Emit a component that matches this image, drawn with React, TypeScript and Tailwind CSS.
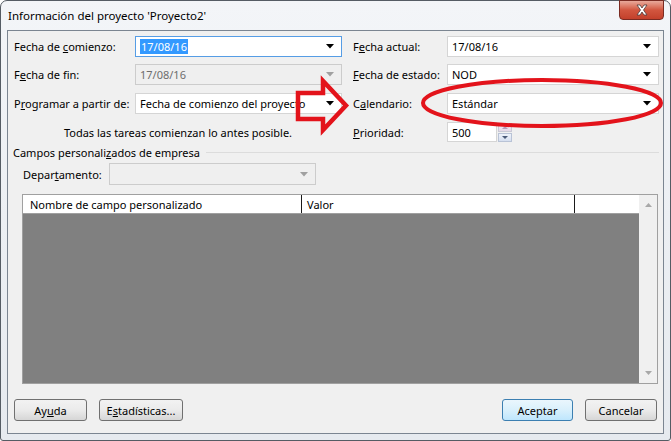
import React from "react";

const font = { fontFamily: '"Noto Sans", "Segoe UI", sans-serif' };

function Tri({ gray = false }: { gray?: boolean }) {
  return (
    <svg width="8" height="5" viewBox="0 0 8 5" className="shrink-0">
      <path d="M0 0 H8 L4 4.5 Z" fill={gray ? "#a0a0a0" : "#000"} />
    </svg>
  );
}

function Combo({
  value,
  w,
  disabled = false,
  focused = false,
  selected = false,
  h = "h-[21px]",
}: {
  value: string;
  w: string;
  disabled?: boolean;
  focused?: boolean;
  selected?: boolean;
  h?: string;
}) {
  return (
    <div
      className={`${w} ${h} shrink-0 flex items-center border ${
        focused ? "border-[#569de5]" : disabled ? "border-[#cccccc]" : "border-[#d5d5d5]"
      } ${disabled ? "bg-[#efefef]" : "bg-white"} pl-[4px] pr-[7px]`}
    >
      <div className="flex-1 overflow-hidden whitespace-nowrap leading-[15px]">
        {selected ? (
          <span className="bg-[#3399ff] text-white px-[1px] py-[1px]">{value}</span>
        ) : (
          <span className={disabled ? "text-[#6d6d6d]" : "text-black"}>{value}</span>
        )}
      </div>
      <Tri gray={disabled} />
    </div>
  );
}

function Btn({ children, w, def = false }: { children: React.ReactNode; w: string; def?: boolean }) {
  return (
    <div
      className={`${w} h-[22px] flex items-center justify-center rounded-[3px] border whitespace-nowrap ${
        def
          ? "border-[#3c7fb1] bg-gradient-to-b from-[#eaf6fd] via-[#d9f0fc] to-[#bee6fd]"
          : "border-[#707070] bg-gradient-to-b from-[#f2f2f2] via-[#ebebeb] to-[#d6d6d6]"
      } text-black`}
    >
      {children}
    </div>
  );
}

export default function App() {
  return (
    <div className="w-[671px] h-[441px] bg-white overflow-hidden" style={font}>
      <div className="relative w-[671px] h-[441px] flex flex-col rounded-t-[7px] rounded-b-[3px] border border-[#555c64] bg-gradient-to-b from-[#f3f5f8] via-[#eceff3] to-[#e6eaef] text-[11px] leading-[15px]">
        {/* title bar */}
        <div className="h-[29px] flex items-center pl-[7px] text-black text-[11.5px] shrink-0 whitespace-nowrap">
          Información del proyecto 'Proyecto2'
        </div>
        <div className="absolute top-[-1px] right-[6px] w-[45px] h-[20px] rounded-b-[4px] border border-[#7a2b22] bg-gradient-to-b from-[#e8a99b] via-[#d2563f] to-[#c3402b] flex items-center justify-center">
          <svg width="14" height="12" viewBox="0 0 14 12">
            <path
              d="M2 1 L5 1 L7 4 L9 1 L12 1 L8.5 6 L12 11 L9 11 L7 8 L5 11 L2 11 L5.5 6 Z"
              fill="#ffffff"
              stroke="#4a3a3a"
              strokeWidth="0.8"
            />
          </svg>
        </div>

        {/* client area */}
        <div className="mx-[6px] mb-[6px] flex-1 border border-[#7b8591] bg-[#f0f0f0] flex flex-col text-black whitespace-nowrap">
          {/* row 1 */}
          <div className="flex items-center mt-[5px] pl-[6px]">
            <div className="w-[121px] shrink-0">
              Fecha de <span className="underline">c</span>omienzo:
            </div>
            <Combo w="w-[207px]" value="17/08/16" focused selected />
            <div className="w-[94px] ml-[11px] shrink-0">
              F<span className="underline">e</span>cha actual:
            </div>
            <Combo w="w-[212px]" value="17/08/16" />
          </div>
          {/* row 2 */}
          <div className="flex items-center mt-[7px] pl-[6px]">
            <div className="w-[121px] shrink-0">
              F<span className="underline">e</span>cha de fin:
            </div>
            <Combo w="w-[207px]" value="17/08/16" disabled />
            <div className="w-[94px] ml-[11px] shrink-0">
              <span className="underline">F</span>echa de estado:
            </div>
            <Combo w="w-[212px]" value="NOD" />
          </div>
          {/* row 3 */}
          <div className="flex items-center mt-[8px] pl-[6px]">
            <div className="w-[121px] shrink-0">
              P<span className="underline">r</span>ogramar a partir de:
            </div>
            <Combo w="w-[207px]" value="Fecha de comienzo del proyecto" />
            <div className="w-[94px] ml-[11px] shrink-0">
              C<span className="underline">a</span>lendario:
            </div>
            <Combo w="w-[212px]" value="Estándar" />
          </div>
          {/* row 4 */}
          <div className="flex items-center mt-[8px] pl-[6px]">
            <div className="w-[328px] shrink-0 text-center">Todas las tareas comienzan lo antes posible.</div>
            <div className="w-[94px] ml-[11px] shrink-0">
              <span className="underline">P</span>rioridad:
            </div>
            <div className="flex items-center">
              <div className="w-[50px] h-[20px] bg-white border border-[#d5d5d5] flex items-center pl-[4px]">500</div>
              <div className="flex flex-col ml-[1px] gap-[1px]">
                <div className="w-[14px] h-[9px] border border-[#c9c9d6] bg-gradient-to-b from-[#f7f0f8] to-[#e4d7e6] flex items-center justify-center">
                  <svg width="6" height="3" viewBox="0 0 6 3">
                    <path d="M0 3 L3 0 L6 3 Z" fill="#b99ab8" />
                  </svg>
                </div>
                <div className="w-[14px] h-[9px] border border-[#b9c3d6] bg-gradient-to-b from-[#eef2fa] to-[#d6dff0] flex items-center justify-center">
                  <svg width="6" height="3" viewBox="0 0 6 3">
                    <path d="M0 0 L6 0 L3 3 Z" fill="#4a5a78" />
                  </svg>
                </div>
              </div>
            </div>
          </div>
          {/* section header */}
          <div className="flex items-center mt-[2px] pl-[5px] pr-[4px] h-[16px]">
            <span>
              Campos personali<span className="underline">z</span>ados de empresa
            </span>
            <div className="flex-1 h-px bg-[#dcdcdc] ml-[6px]" />
          </div>
          {/* Departamento */}
          <div className="flex items-center mt-[3px] pl-[15px]">
            <div className="w-[86px] shrink-0">
              Depar<span className="underline">t</span>amento:
            </div>
            <Combo w="w-[207px]" h="h-[22px]" value="" disabled />
          </div>
          {/* grid */}
          <div className="mt-[9px] ml-[14px] mr-[5px] h-[190px] border border-[#a0a0a0] flex bg-[#f0f0f0]">
            <div className="flex-1 flex flex-col">
              <div className="h-[19px] bg-white flex border-b border-[#a0a0a0]">
                <div className="w-[279px] flex items-center pl-[7px] border-r border-[#1a1a1a]">
                  Nombre de campo personalizado
                </div>
                <div className="w-[273px] flex items-center pl-[5px] border-r border-[#1a1a1a]">Valor</div>
                <div className="flex-1" />
              </div>
              <div className="flex-1 bg-[#808080]" />
            </div>
            <div className="w-[18px] flex flex-col items-center justify-between py-[8px] bg-[#f0f0f0]">
              <svg width="7" height="4" viewBox="0 0 7 4">
                <path d="M0 4 L3.5 0 L7 4 Z" fill="#a8a8a8" />
              </svg>
              <svg width="7" height="4" viewBox="0 0 7 4">
                <path d="M0 0 L7 0 L3.5 4 Z" fill="#a8a8a8" />
              </svg>
            </div>
          </div>
          {/* buttons */}
          <div className="flex items-center mt-[15px] pl-[6px] pr-[6px]">
            <Btn w="w-[73px]">
              Ay<span className="underline">u</span>da
            </Btn>
            <div className="ml-[12px]">
              <Btn w="w-[84px]">
                E<span className="underline">s</span>tadísticas...
              </Btn>
            </div>
            <div className="flex-1" />
            <Btn w="w-[71px]" def>
              Aceptar
            </Btn>
            <div className="ml-[12px]">
              <Btn w="w-[72px]">Cancelar</Btn>
            </div>
          </div>
        </div>

        {/* red annotations */}
        <svg className="absolute left-[-1px] top-[-1px] pointer-events-none" width="671" height="441" viewBox="0 0 671 441">
          <polygon
            points="298,93 323,93 323,81 346,105.5 323,130 323,119 298,119"
            fill="none"
            stroke="#e3131b"
            strokeWidth="4.5"
            strokeLinejoin="miter"
          />
          <ellipse cx="542" cy="103" rx="119" ry="23" fill="none" stroke="#e3131b" strokeWidth="4" />
        </svg>
      </div>
    </div>
  );
}
